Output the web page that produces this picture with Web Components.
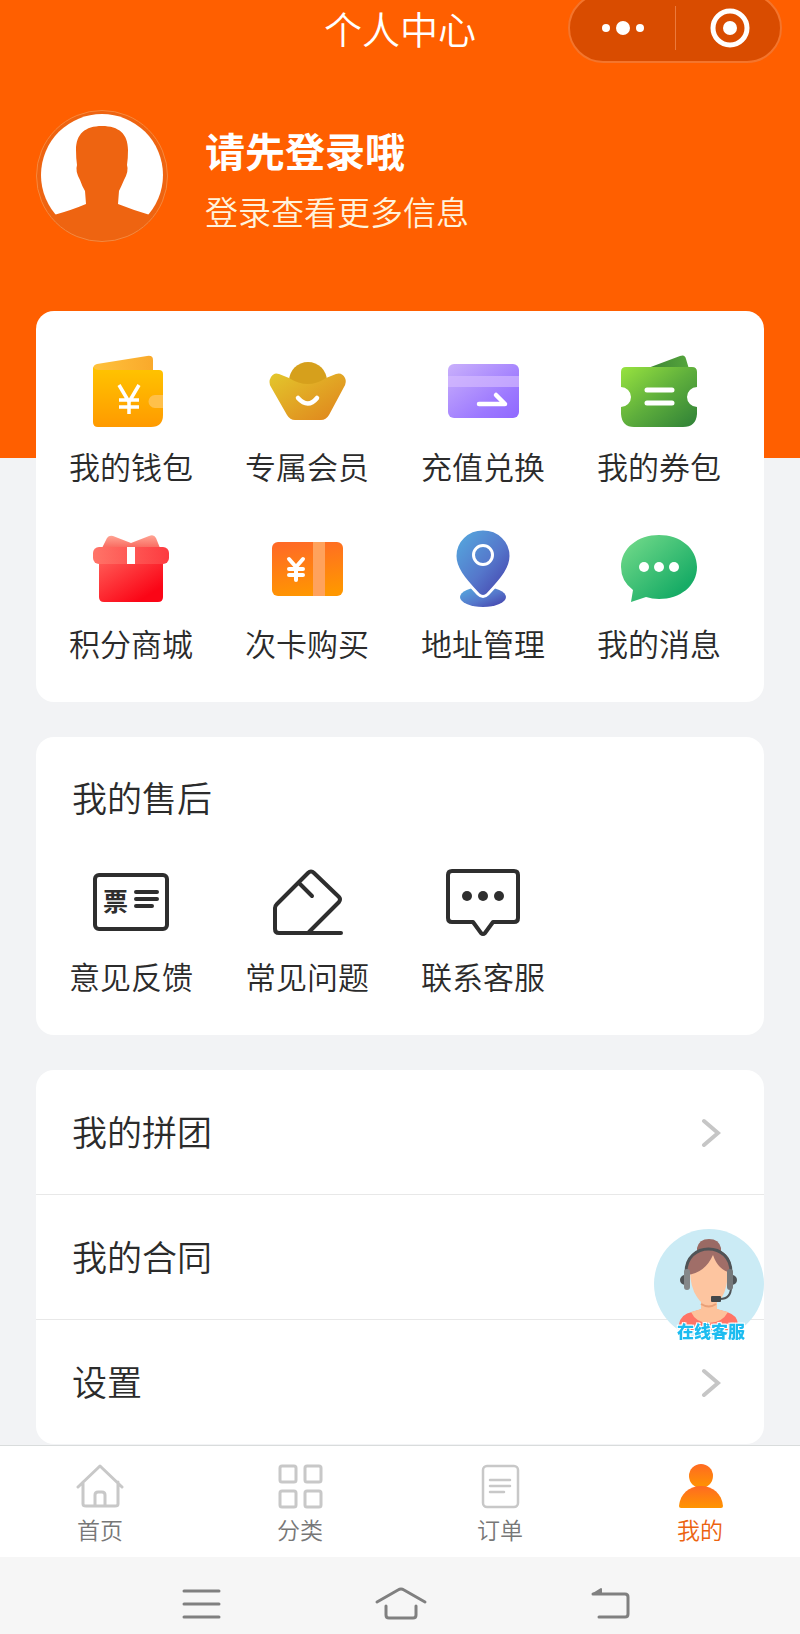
<!DOCTYPE html>
<html lang="zh-CN">
<head>
<meta charset="UTF-8">
<meta name="viewport" content="width=device-width, initial-scale=1.0">
<title>个人中心</title>
<style>
    body {
        margin: 0;
        background: #f2f3f5;
        color: #2b2b2b;
        font-family: "Noto Sans CJK SC", sans-serif;
        font-weight: 350;
    }
</style>
</head>
<body>

<user-center>
    <nav-header slot="header" name="请先登录哦" info="登录查看更多信息">个人中心</nav-header>

    <menu-card>
        <menu-item icon="wallet">我的钱包</menu-item>
        <menu-item icon="ingot">专属会员</menu-item>
        <menu-item icon="recharge">充值兑换</menu-item>
        <menu-item icon="coupon">我的券包</menu-item>
        <menu-item icon="gift">积分商城</menu-item>
        <menu-item icon="timescard">次卡购买</menu-item>
        <menu-item icon="address">地址管理</menu-item>
        <menu-item icon="message">我的消息</menu-item>
    </menu-card>

    <menu-card heading="我的售后">
        <menu-item icon="feedback">意见反馈</menu-item>
        <menu-item icon="question">常见问题</menu-item>
        <menu-item icon="contact">联系客服</menu-item>
    </menu-card>

    <link-list>
        <link-row>我的拼团</link-row>
        <link-row>我的合同</link-row>
        <link-row>设置</link-row>
    </link-list>

    <tab-bar slot="footer">
        <tab-item icon="home">首页</tab-item>
        <tab-item icon="category">分类</tab-item>
        <tab-item icon="order">订单</tab-item>
        <tab-item icon="mine" active>我的</tab-item>
    </tab-bar>
    <system-bar slot="footer"></system-bar>
    <service-button slot="footer">在线客服</service-button>
</user-center>

<script>
/* Icons: [viewBox size, markup] */
const icons = {

    wallet: [80, `
        <defs>
            <linearGradient id="a" x1="0" y1="0" x2="0" y2="1"><stop offset="0" stop-color="#ffc400"/><stop offset="1" stop-color="#ff9a00"/></linearGradient>
            <linearGradient id="b" x1="0" y1="0" x2="1" y2="0"><stop offset="0" stop-color="#ffc23c"/><stop offset="1" stop-color="#f9a92b"/></linearGradient>
        </defs>
        <path fill="url(#b)" d="M2 22V17q0-4 4-5L56 4q6-1 6 4v14z"/>
        <path fill="url(#a)" d="M2 15q2 3 6 3h60q4 0 4 4v41q0 12-12 12H7q-5 0-5-5z"/>
        <path fill="#ffc04a" d="M72 43H64a6.500 6.500 0 0 0 0 13h8z"/>
        <path fill="none" stroke="#fff" stroke-width="3.500" d="M28 33l10 17 10-17M38 49v13M28 48h20M28 55h20"/>`],

    ingot: [80, `
        <defs><linearGradient id="a" x1="0" y1="0" x2="1" y2="1"><stop offset="0" stop-color="#e3c72c"/><stop offset="1" stop-color="#e0821c"/></linearGradient></defs>
        <circle cx="41" cy="29" r="19" fill="#d6a01c"/>
        <path fill="url(#a)" d="M12 22L22 26Q41 38 59 26L69 22Q75 20 78 26Q80 30 77 35L62 63Q59 68 54 68H28Q23 68 20 63L4 35Q1 30 4 25Q7 20 12 22z"/>
        <path fill="none" stroke="#fff" stroke-width="4.500" stroke-linecap="round" d="M31 46q10 11 19 0"/>`],

    recharge: [80, `
        <defs><linearGradient id="a" x1="0" y1="0" x2="1" y2="1"><stop offset="0" stop-color="#c9b0fb"/><stop offset=".7" stop-color="#9c78ff"/><stop offset="1" stop-color="#9068ff"/></linearGradient></defs>
        <rect x="5" y="12" width="71" height="54" rx="6" fill="url(#a)"/>
        <rect x="5" y="24" width="71" height="11" fill="#d6bcff" opacity=".65"/>
        <path fill="none" stroke="#fff" stroke-width="4.500" stroke-linecap="round" stroke-linejoin="round" d="M36 52h26L53 43"/>`],

    coupon: [80, `
        <defs>
            <linearGradient id="a" x1="0" y1="0" x2="1" y2="1"><stop offset="0" stop-color="#98e33f"/><stop offset=".5" stop-color="#5eae3c"/><stop offset="1" stop-color="#2e8037"/></linearGradient>
            <linearGradient id="b" x1="0" y1="0" x2="1" y2="0"><stop offset="0" stop-color="#3d8534"/><stop offset="1" stop-color="#55a53c"/></linearGradient>
        </defs>
        <path fill="url(#b)" d="M29 16L61 4q5-2 6 3l3 10z"/>
        <path fill="url(#a)" d="M7 15H73q5 0 5 5V35a10 10 0 0 0 0 20V62q-1 13-14 13H15Q3 75 2 62V55a10 10 0 0 0 0-20V20q0-5 5-5z"/>
        <path stroke="#fff" stroke-width="5" stroke-linecap="round" d="M28 38h25M28 51h25"/>`],

    gift: [80, `
        <defs>
            <linearGradient id="a" x1="0" y1="0" x2="1" y2="1"><stop offset="0" stop-color="#ff5a55"/><stop offset=".8" stop-color="#fb0516"/></linearGradient>
            <linearGradient id="b" x1="0" y1="0" x2="1" y2="0"><stop offset="0" stop-color="#ff7468"/><stop offset="1" stop-color="#fd3b40"/></linearGradient>
            <linearGradient id="c" x1="0" y1="0" x2="0" y2="1"><stop offset="0" stop-color="#ffa594"/><stop offset="1" stop-color="#f9685e"/></linearGradient>
        </defs>
        <path fill="url(#c)" d="M11 19L16 9q2-3 6-2l18 7 18-7q5-2 7 2l4 10z"/>
        <path fill="url(#a)" d="M8 33H72V68q0 5-5 5H13q-5 0-5-5z"/>
        <rect x="2" y="18" width="76" height="17" rx="6" fill="url(#b)"/>
        <path fill="#fff" d="M36 18h8v17h-8z"/>`],

    timescard: [80, `
        <defs><linearGradient id="a" x1=".3" y1="0" x2=".5" y2="1"><stop offset="0" stop-color="#ff6a26"/><stop offset="1" stop-color="#ff9700"/></linearGradient></defs>
        <rect x="5" y="13" width="71" height="54" rx="6" fill="url(#a)"/>
        <path fill="#ffa25c" d="M46 13h12v54H46z"/>
        <path fill="none" stroke="#fff" stroke-width="4" stroke-linecap="round" stroke-linejoin="round" d="M22 30l7 8 7-8M29 38v13M22 40h14M22 46h14"/>`],

    address: [80, `
        <defs><linearGradient id="a" x1="0" y1="0" x2="1" y2="1"><stop offset="0" stop-color="#55aee0"/><stop offset=".55" stop-color="#5577cb"/><stop offset="1" stop-color="#423aa8"/></linearGradient></defs>
        <ellipse cx="40" cy="68" rx="23" ry="10" fill="url(#a)"/>
        <path fill="url(#a)" stroke="#fff" stroke-width="3" d="M40 0C24 0 12 12 12 27C12 39 20 49 35 65Q40 70 45 65C60 49 68 39 68 27C68 12 56 0 40 0z"/>
        <circle cx="40" cy="26" r="9.500" fill="none" stroke="#fff" stroke-width="3"/>`],

    message: [80, `
        <defs><linearGradient id="a" x1="0" y1="0" x2="1" y2="1"><stop offset="0" stop-color="#78dd8c"/><stop offset=".8" stop-color="#18ac66"/></linearGradient></defs>
        <path fill="url(#a)" d="M40 6C61 6 78 19 78 38S61 70 40 70Q33 70 27 68L12 73L14 61Q2 52 2 38C2 19 19 6 40 6z"/>
        <g fill="#fff"><circle cx="25" cy="38" r="5"/><circle cx="40" cy="38" r="5"/><circle cx="55" cy="38" r="5"/></g>`],

    feedback: [80, `
        <g fill="none" stroke="#2e2e2e" stroke-width="4" stroke-linecap="round">
            <rect x="4" y="13" width="72" height="54" rx="4"/>
            <path d="M45 30h21M45 37h21M45 44h16"/>
        </g>
        <text x="12" y="49" font-size="25" font-weight="700" fill="#2e2e2e">票</text>`],

    question: [80, `
        <path fill="none" stroke="#2e2e2e" stroke-width="4" stroke-linecap="round" stroke-linejoin="round"
            d="M74 71H12q-4 0-4-4V46q0-2 2-4L41 11q3-3 6 0L72 35q2 2 0 5L42 70M32 21L45 34"/>`],

    contact: [80, `
        <path fill="none" stroke="#2e2e2e" stroke-width="4" stroke-linejoin="round" d="M9 9H71q4 0 4 4V56q0 4-4 4H50l-8 11q-2 2-4 0L30 60H9q-4 0-4-4V13q0-4 4-4z"/>
        <g fill="#2e2e2e"><circle cx="24" cy="34" r="5"/><circle cx="40" cy="34" r="5"/><circle cx="56" cy="34" r="5"/></g>`],

    home: [48, `
        <path fill="none" stroke="#c8c8c8" stroke-width="3" stroke-linecap="round" stroke-linejoin="round"
            d="M2 24L24 3L46 24M7 19V41q0 2 3 2H39q3 0 3-2V19M19 43V32q0-3 3-3h4q3 0 3 3V43"/>`],

    category: [48, `
        <g fill="none" stroke="#c8c8c8" stroke-width="3">
            <rect x="4" y="3" width="16" height="16" rx="2"/><rect x="29" y="3" width="16" height="16" rx="2"/>
            <rect x="4" y="28" width="16" height="16" rx="2"/><rect x="29" y="28" width="16" height="16" rx="2"/>
        </g>`],

    order: [48, `
        <g fill="none" stroke="#c8c8c8" stroke-width="2.500" stroke-linecap="round">
            <rect x="7" y="3" width="35" height="41" rx="4"/>
            <path d="M14 17h20M14 23h20M14 29h14"/>
        </g>`],

    mine: [48, `
        <defs><linearGradient id="a" x1="0" y1="0" x2="0" y2="1"><stop offset="0" stop-color="#ff6a22"/><stop offset="1" stop-color="#ff9500"/></linearGradient></defs>
        <circle cx="25" cy="13" r="12" fill="url(#a)"/>
        <path fill="url(#a)" d="M3 43C4 31 13 23 25 23S46 31 47 43q0 2-2 2H5q-2 0-2-2z"/>`]
};

const svgIcon = (name) => {
    const [size, markup] = icons[name];
    return `<svg width="${size}" height="${size}" viewBox="0 0 ${size} ${size}" aria-hidden="true">${markup}</svg>`;
};


/* Page shell: header, stacked cards, footer */
class UserCenter extends HTMLElement {

    constructor(){
        super();
        this.attachShadow({ mode: 'open' });
        this.shadowRoot.innerHTML = `
            <style>
                :host {
                    display: flex;
                    flex-direction: column;
                    min-height: 100vh;
                }
                main {
                    display: flex;
                    flex-direction: column;
                    flex: 1;
                    gap: 35px;
                    /* first card overlaps the orange area */
                    margin-top: -147px;
                    padding: 0 36px 1px;
                }
            </style>
            <slot name="header"></slot>
            <main><slot></slot></main>
            <slot name="footer"></slot>
        `;
    }

}


/* Orange header with title, mini program capsule and login area */
class NavHeader extends HTMLElement {

    constructor(){
        super();
        this.attachShadow({ mode: 'open' });
        this.shadowRoot.innerHTML = `
            <style>
                :host {
                    display: block;
                    height: 458px;
                    overflow: hidden;
                    background: #ff5f00;
                    color: #fff;
                }
                .bar {
                    display: grid;
                    grid-template-columns: 1fr auto 1fr;
                    grid-template-rows: 56px;
                    align-items: center;
                    padding: 0 18px;
                }
                h1 {
                    grid-column: 2;
                    margin: 0;
                    font-size: 38px;
                    font-weight: inherit;
                    line-height: 56px;
                }
                /* taller than the bar, so its top is cut by the screen edge */
                .capsule {
                    display: grid;
                    grid-template-columns: 1fr 1fr;
                    justify-self: end;
                    align-items: center;
                    box-sizing: border-box;
                    width: 214px;
                    height: 70px;
                    border: 2px solid #f4752c;
                    border-radius: 35px;
                    background: #d94c00;
                }
                button {
                    display: flex;
                    align-items: center;
                    justify-content: center;
                    box-sizing: border-box;
                    height: 44px;
                    padding: 0;
                    border: 0;
                    background: none;
                }
                button + button {
                    padding-left: 4px;
                    border-left: 1px solid #ec7a3c;
                }
                .profile {
                    display: flex;
                    gap: 37px;
                    margin-top: 53px;
                    padding: 0 36px;
                }
                .text {
                    display: flex;
                    flex-direction: column;
                    gap: 11px;
                    padding-top: 13px;
                }
                h2, p {
                    margin: 0;
                }
                h2 {
                    font-size: 40px;
                    font-weight: 700;
                    line-height: 56px;
                }
                p {
                    color: #fff3dc;
                    font-size: 33px;
                    line-height: 44px;
                }
            </style>
            <div class="bar">
                <h1><slot></slot></h1>
                <div class="capsule">
                    <button aria-label="更多">
                        <svg width="44" height="16" viewBox="0 0 44 16" fill="#fff"><circle cx="5" cy="8" r="4"/><circle cx="22" cy="8" r="7"/><circle cx="39" cy="8" r="4"/></svg>
                    </button>
                    <button aria-label="关闭">
                        <svg width="40" height="40" viewBox="0 0 40 40"><circle cx="20" cy="20" r="17" fill="none" stroke="#fff" stroke-width="5"/><circle cx="20" cy="20" r="7" fill="#fff"/></svg>
                    </button>
                </div>
            </div>
            <div class="profile">
                <svg width="132" height="133" viewBox="0 0 132 133" aria-hidden="true">
                    <defs><clipPath id="c"><circle cx="66" cy="67" r="66"/></clipPath></defs>
                    <circle cx="66" cy="67" r="65" fill="#ee6411"/>
                    <circle cx="66" cy="66" r="61" fill="#fff"/>
                    <path clip-path="url(#c)" fill="#ee6411" d="M66 17C83 17 92 25 92 41Q92 50 91 56Q93 62 88 71Q85 78 83 82L82 95Q97 101 114 106L132 100V133H0V100L18 106Q36 101 50 95L49 82Q46 77 44 71Q39 62 41 56Q40 50 40 41C40 25 49 17 66 17z"/>
                    <circle cx="66" cy="67" r="65.500" fill="none" stroke="#f5893f"/>
                </svg>
                <div class="text">
                    <h2></h2>
                    <p></p>
                </div>
            </div>
        `;
        this.shadowRoot.querySelector('h2').innerText = this.getAttribute('name');
        this.shadowRoot.querySelector('p').innerText = this.getAttribute('info');
    }

}


/* White card with four columns of menu items */
class MenuCard extends HTMLElement {

    constructor(){
        super();
        this.attachShadow({ mode: 'open' });
        const heading = this.getAttribute('heading');
        this.shadowRoot.innerHTML = `
            <style>
                :host {
                    display: block;
                    padding: 41px 17px 37px 7px;
                    border-radius: 18px;
                    background: #fff;
                }
                :host([heading]) {
                    padding-top: 36px;
                }
                h2 {
                    margin: 0 0 41px 29px;
                    font-size: 35px;
                    font-weight: inherit;
                    line-height: 48px;
                }
                .grid {
                    display: grid;
                    grid-template-columns: repeat(4, 1fr);
                    row-gap: 41px;
                }
            </style>
            ${heading ? `<h2>${heading}</h2>` : ''}
            <div class="grid"><slot></slot></div>
        `;
    }

}


class MenuItem extends HTMLElement {

    constructor(){
        super();
        this.attachShadow({ mode: 'open' });
        this.shadowRoot.innerHTML = `
            <style>
                :host {
                    display: block;
                }
                a {
                    display: flex;
                    flex-direction: column;
                    align-items: center;
                    gap: 12px;
                    color: inherit;
                    font-size: 31px;
                    line-height: 44px;
                    text-decoration: none;
                    white-space: nowrap;
                }
            </style>
            <a href="#">
                ${svgIcon(this.getAttribute('icon'))}
                <span><slot></slot></span>
            </a>
        `;
    }

}


class LinkList extends HTMLElement {

    constructor(){
        super();
        this.attachShadow({ mode: 'open' });
        this.shadowRoot.innerHTML = `
            <style>
                :host {
                    display: block;
                    border-radius: 18px;
                    background: #fff;
                }
                ::slotted(link-row:not(:first-child)) {
                    border-top: 1px solid #e8e8e8;
                }
            </style>
            <slot></slot>
        `;
    }

}


class LinkRow extends HTMLElement {

    constructor(){
        super();
        this.attachShadow({ mode: 'open' });
        this.shadowRoot.innerHTML = `
            <style>
                :host {
                    display: block;
                }
                a {
                    display: flex;
                    align-items: center;
                    justify-content: space-between;
                    padding: 37px 43px 39px 36px;
                    color: inherit;
                    font-size: 35px;
                    line-height: 48px;
                    text-decoration: none;
                }
            </style>
            <a href="#">
                <span><slot></slot></span>
                <svg width="20" height="32" viewBox="0 0 20 32" aria-hidden="true">
                    <path d="M3 6l14 12L3 30" fill="none" stroke="#c6c6c6" stroke-width="4" stroke-linecap="round"/>
                </svg>
            </a>
        `;
    }

}


/* Bottom tabs */
class TabBar extends HTMLElement {

    constructor(){
        super();
        this.attachShadow({ mode: 'open' });
        this.shadowRoot.innerHTML = `
            <style>
                :host {
                    display: block;
                    border-top: 1px solid #d9dcdc;
                    background: #fff;
                }
                nav {
                    display: grid;
                    grid-template-columns: repeat(4, 1fr);
                    padding: 17px 0 14px;
                }
            </style>
            <nav><slot></slot></nav>
        `;
    }

}


class TabItem extends HTMLElement {

    constructor(){
        super();
        this.attachShadow({ mode: 'open' });
        this.shadowRoot.innerHTML = `
            <style>
                :host {
                    display: block;
                    color: #777;
                }
                :host([active]) {
                    color: #ec6310;
                }
                a {
                    display: flex;
                    flex-direction: column;
                    align-items: center;
                    gap: 4px;
                    color: inherit;
                    font-size: 23px;
                    line-height: 28px;
                    text-decoration: none;
                }
            </style>
            <a href="#">
                ${svgIcon(this.getAttribute('icon'))}
                <span><slot></slot></span>
            </a>
        `;
    }

}


/* Phone navigation keys */
class SystemBar extends HTMLElement {

    constructor(){
        super();
        this.attachShadow({ mode: 'open' });
        this.shadowRoot.innerHTML = `
            <style>
                :host {
                    display: grid;
                    grid-template-columns: repeat(3, 1fr);
                    justify-items: center;
                    padding: 28px 12.5% 13px;
                    background: #f6f6f6;
                }
                button {
                    width: 60px;
                    height: 36px;
                    padding: 0;
                    border: 0;
                    background: none;
                }
                svg {
                    display: block;
                    fill: none;
                    stroke: #808080;
                    stroke-width: 3;
                    stroke-linecap: round;
                    stroke-linejoin: round;
                }
            </style>
            <button aria-label="菜单">
                <svg width="60" height="36" viewBox="0 0 60 36"><path d="M14 6h35M14 19h35M14 32h35"/></svg>
            </button>
            <button aria-label="主屏幕">
                <svg width="60" height="36" viewBox="0 0 60 36"><path d="M7 17L28 5q3-2 6 0L55 17M16 21V30q0 3 3 3H43q3 0 3-3V21"/></svg>
            </button>
            <button aria-label="返回">
                <svg width="60" height="36" viewBox="0 0 60 36"><path d="M23 9H55q3 0 3 3V29q0 3-3 3H29"/><path d="M23 9l8-5v5z" fill="#808080" stroke-width="2"/></svg>
            </button>
        `;
    }

}


/* Floating customer service entry */
class ServiceButton extends HTMLElement {

    constructor(){
        super();
        this.attachShadow({ mode: 'open' });
        this.shadowRoot.innerHTML = `
            <style>
                :host {
                    position: fixed;
                    right: 36px;
                    bottom: 293px;
                }
                button {
                    display: block;
                    position: relative;
                    padding: 0;
                    border: 0;
                    background: none;
                    font-family: inherit;
                }
                svg {
                    display: block;
                }
                span {
                    position: absolute;
                    right: 0;
                    bottom: 0;
                    left: 4px;
                    color: #1cbcf0;
                    font-size: 17px;
                    font-weight: 900;
                    line-height: 20px;
                    text-shadow: 1px 1px #fff, -1px 1px #fff, 1px -1px #fff, -1px -1px #fff;
                }
            </style>
            <button>
                <svg width="110" height="112" viewBox="0 0 110 112" aria-hidden="true">
                    <defs><clipPath id="c"><circle cx="55" cy="55" r="55"/></clipPath></defs>
                    <circle cx="55" cy="55" r="55" fill="#cbebf5"/>
                    <g clip-path="url(#c)">
                        <path fill="#ff7466" d="M25 101V95Q27 85 38 83L48 80H62L73 83Q83 86 84 95V101z"/>
                        <path fill="#fdc29b" d="M47 72H63V80L74 83Q68 94 55 94T37 83L47 80z"/>
                    </g>
                    <path fill="#9a6a64" d="M43 24V19Q45 10 55 10T67 19V24z"/>
                    <path fill="#fdc5a0" d="M36 40Q36 22 55 22T74 40Q74 58 68 68Q62 76 55 76T43 68Q36 58 36 40z"/>
                    <path fill="none" stroke="#e8a078" stroke-width="2" d="M47 75q8 5 15 0"/>
                    <path fill="#a06e68" d="M33 46Q31 20 55 20T77 44Q64 41 59 26Q51 44 33 46z"/>
                    <path fill="none" stroke="#505457" stroke-width="3" d="M32 44C31 12 78 12 77 44"/>
                    <path fill="none" stroke="#505457" stroke-width="2" d="M77 58Q77 70 66 70"/>
                    <path fill="#505457" d="M31 46a5 5 0 0 0 0 10zM78 46a5 5 0 0 1 0 10z"/>
                    <rect x="30" y="40" width="6" height="21" rx="3" fill="#85888a"/>
                    <rect x="73" y="40" width="6" height="21" rx="3" fill="#75787a"/>
                    <rect x="57" y="67" width="10" height="6" rx="1" fill="#43484b"/>
                </svg>
                <span><slot></slot></span>
            </button>
        `;
    }

}


window.customElements.define('user-center', UserCenter);
window.customElements.define('nav-header', NavHeader);
window.customElements.define('menu-card', MenuCard);
window.customElements.define('menu-item', MenuItem);
window.customElements.define('link-list', LinkList);
window.customElements.define('link-row', LinkRow);
window.customElements.define('tab-bar', TabBar);
window.customElements.define('tab-item', TabItem);
window.customElements.define('system-bar', SystemBar);
window.customElements.define('service-button', ServiceButton);
</script>
</body>
</html>
